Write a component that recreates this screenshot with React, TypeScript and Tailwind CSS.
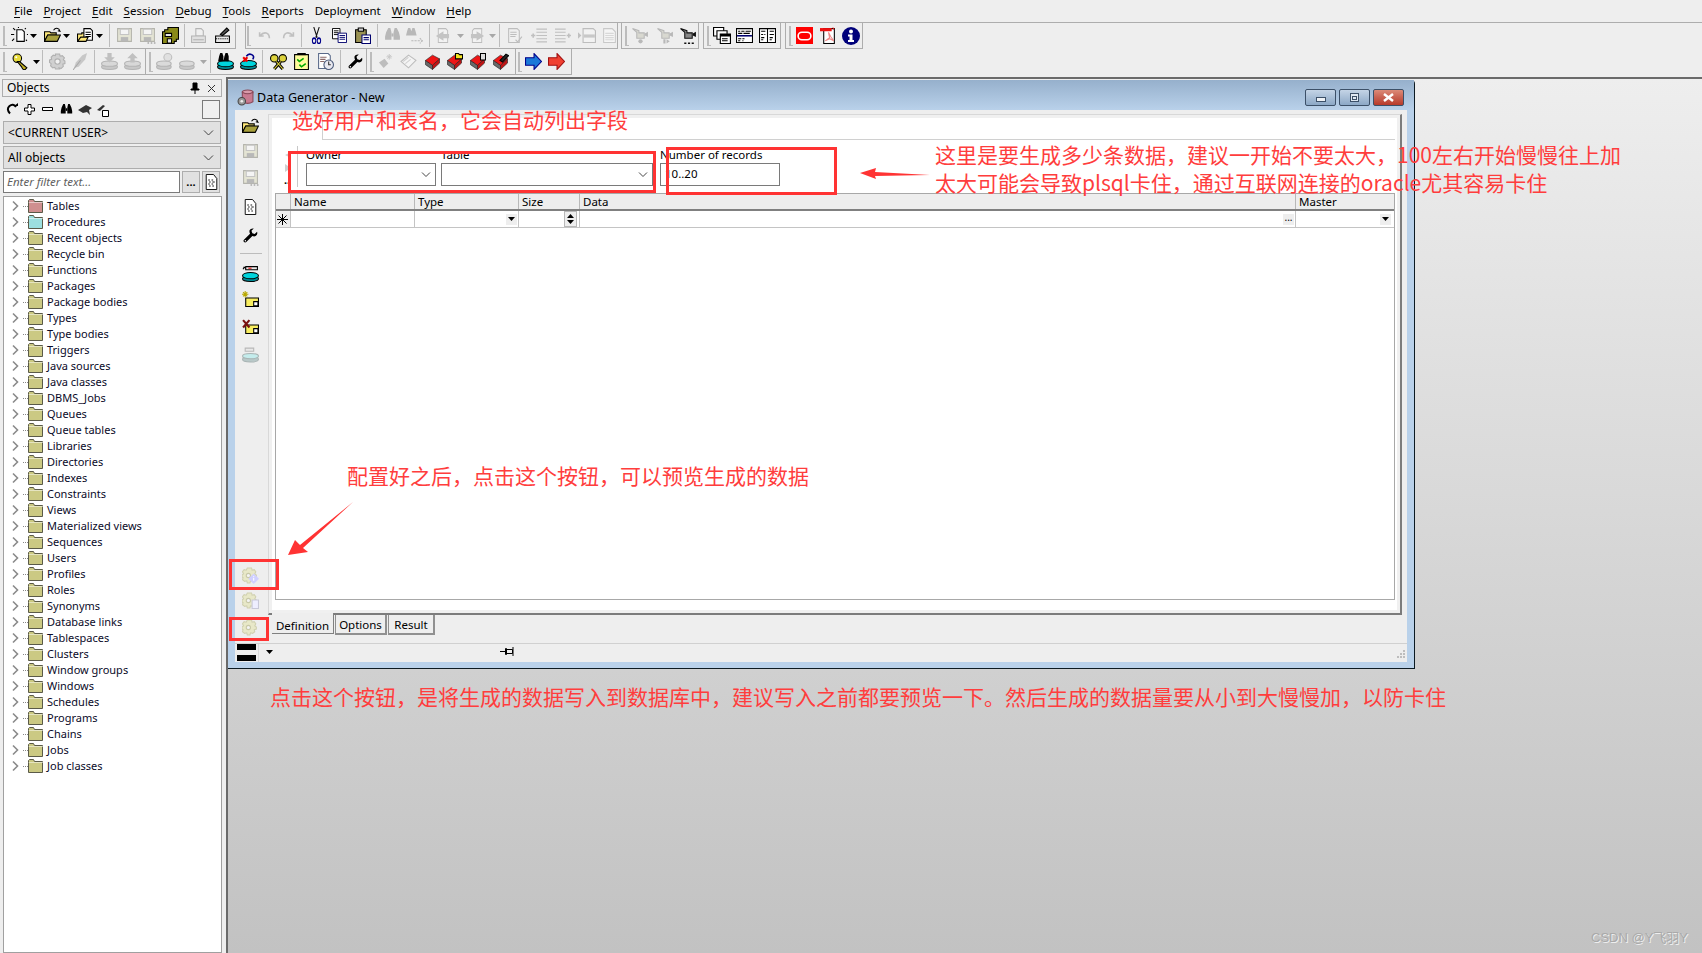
import type { ReactNode } from "react";

const ui = "font-['Noto_Sans',sans-serif]";

function Svg({ w = 17, h = 17, className = "", children }: { w?: number; h?: number; className?: string; children: ReactNode }) {
    return (
        <svg width={w} height={h} viewBox="0 0 16 16" preserveAspectRatio="none" className={`shrink-0 ${className}`}>
            {children}
        </svg>
    );
}

type P = { className?: string };

const Caret = ({ className = "", gray = false }: P & { gray?: boolean }) => (
    <svg width="7" height="4" viewBox="0 0 7 4" className={`shrink-0 ${className}`}>
        <path d="M0 0h7L3.5 4z" fill={gray ? "#a8a8a8" : "#000"} />
    </svg>
);
const Grip = ({ className = "" }: P) => <div className={`w-[4px] h-[20px] shrink-0 border-l-2 border-b border-[#bcbcbc] ${className}`} />;
const Sep = ({ className = "" }: P) => <div className={`w-px h-[23px] shrink-0 bg-[#bcbcbc] ${className}`} />;

const NewDoc = ({ className }: P) => (
    <Svg className={className}>
        <path d="M5.5 2.5h5l2 2v9h-7z" fill="#fff" stroke="#000" />
        <path d="M2 1l2 2M0 7h3M1 13l2-2M7 0v1M14 1l-1 1M15 7h1M15 13l-1-1" stroke="#000" />
    </Svg>
);
const OpenFolder = ({ className }: P) => (
    <Svg className={className}>
        <path d="M.5 4.5h5l1 1h5v2h-8l-3 6z" fill="#ffe97a" stroke="#000" />
        <path d="M3.5 7.5h12l-3 6H.5z" fill="#a8a03c" stroke="#000" />
        <path d="M9 3q2-3 5-1l1 2-2-.5" fill="none" stroke="#000" />
    </Svg>
);
const OpenDoc = ({ className }: P) => (
    <Svg className={className}>
        <path d="M.5 6.5h4v-1h3v8h-7z" fill="#ffe97a" stroke="#000" />
        <path d="M6.5 1.5h6l2 2v9h-8z" fill="#fff" stroke="#000" />
        <path d="M8 5h5M8 7h5M8 9h5" stroke="#000" />
        <path d="M3.5 9.5h7l-2 4h-8z" fill="#ffe97a" stroke="#000" />
    </Svg>
);
const SaveGray = ({ className, dots = false }: P & { dots?: boolean }) => (
    <Svg className={className}>
        <path d="M1.5 1.5h13v12h-13z" fill="#e4e4d4" stroke="#b4b4ac" />
        <path d="M4 2h8v5H4z" fill="#f4f4f4" stroke="#c4c4c4" />
        <path d="M4.5 9.5h7v4h-7z" fill="#b8b8b8" />
        {dots && <path d="M8 15h1.5M11 15h1.5M14 15h1.5" stroke="#a8a8a8" strokeWidth="1.5" />}
    </Svg>
);
const SaveAll = ({ className }: P) => (
    <Svg className={className}>
        <path d="M5.5.5h10v11h-2v2h-2v2h-11V4.500h2v-2h3z" fill="#8a8a18" stroke="#000" />
        <path d="M3 6h6v3H3zM5 11h4v4H5z" fill="#e8e8e8" stroke="#000" />
    </Svg>
);
const PrintGray = ({ className }: P) => (
    <Svg className={className}>
        <path d="M5.500 1.500h5l2 2v5h-7z" fill="#f0f0f0" stroke="#b4b4b4" />
        <path d="M1.500 8.500h13v6h-13z" fill="#e0e0e0" stroke="#b4b4b4" />
        <path d="M3 12h10" stroke="#b4b4b4" />
    </Svg>
);
const PrintSetup = ({ className }: P) => (
    <Svg className={className}>
        <path d="M1.500 8.500h13v6h-13z" fill="#e8e8e8" stroke="#000" />
        <path d="M2 11h12" stroke="#000" strokeDasharray="1 1" />
        <path d="M6 7l6-6 2 2-6 5z" fill="#555" stroke="#000" />
    </Svg>
);
const Undo = ({ className, flip = false }: P & { flip?: boolean }) => (
    <Svg w={13} h={12} className={`${flip ? "-scale-x-100" : ""} ${className}`}>
        <path d="M2 3v5h5M2.500 8Q6 3 10 4t4 7" fill="none" stroke="#c0c0c0" strokeWidth="2" />
    </Svg>
);
const Scissors = ({ className }: P) => (
    <Svg w={11} h={17} className={className}>
        <path d="M4 0l5 10M12 0L7 10" stroke="#111" strokeWidth="1.5" />
        <circle cx="4.500" cy="13" r="2.500" fill="none" stroke="#00008b" strokeWidth="1.500" />
        <circle cx="11.500" cy="13" r="2.500" fill="none" stroke="#00008b" strokeWidth="1.500" />
    </Svg>
);
const Copy = ({ className }: P) => (
    <Svg w={15} h={15} className={className}>
        <path d="M.5.5h8v11h-8z" fill="#fff" stroke="#000" />
        <path d="M2 3h5M2 5h5M2 7h5" stroke="#000" />
        <path d="M6.500 5.500h9v10h-9z" fill="#fff" stroke="#00006e" />
        <path d="M8 8h6M8 10h6M8 12h6" stroke="#00006e" />
    </Svg>
);
const Paste = ({ className }: P) => (
    <Svg className={className}>
        <path d="M1.500 2.500h10v12h-10z" fill="#9a9252" stroke="#000" />
        <path d="M4 1h5v3H4z" fill="#ccc" stroke="#000" />
        <path d="M7.500 7.500h8v8h-8z" fill="#fff" stroke="#00006e" />
        <path d="M9 10h5M9 12h5" stroke="#00006e" />
    </Svg>
);
const Binoc = ({ className, color = "#b8b8b8", w = 17, h = 17 }: P & { color?: string; w?: number; h?: number }) => (
    <Svg w={w} h={h} className={className}>
        <path d="M2 5l2-4h2l1 4v7H1v-3zM14 5l-2-4h-2L9 5v7h6V9z" fill={color} />
        <path d="M7 6h2v3H7z" fill={color} />
    </Svg>
);
const FindNext = ({ className }: P) => (
    <Svg className={className}>
        <path d="M1 4l1-3h2l1 3v4H0zM9 4L8 1H6L5 4v4h5z" fill="#b8b8b8" />
        <path d="M5 13h10M13 10.500l2.500 2.500-2.500 2.500" fill="none" stroke="#b8b8b8" strokeDasharray="2 1" />
    </Svg>
);
const DocArrow = ({ className, flip = false }: P & { flip?: boolean }) => (
    <Svg w={15} h={17} className={`${flip ? "-scale-x-100" : ""} ${className}`}>
        <path d="M3.500 1.500h8l2 2v11h-10z" fill="#f2f2f2" stroke="#bdbdbd" />
        <path d="M9 4L1 8.500 9 13v-2.500h6v-4H9z" fill="#c4c4c4" />
    </Svg>
);
const DocCheck = ({ className }: P) => (
    <Svg className={className}>
        <path d="M2.500 1.500h8l2 2v11h-10z" fill="#f0f0f0" stroke="#bdbdbd" />
        <path d="M4 5h6M4 7h6M4 9h5M9 12l2 2 4-5" fill="none" stroke="#bdbdbd" />
    </Svg>
);
const Indent = ({ className, flip = false }: P & { flip?: boolean }) => (
    <Svg className={`${flip ? "-scale-x-100" : ""} ${className}`}>
        <path d="M6 2h10M6 5h10M6 8h10M6 11h10M6 14h10" stroke="#c0c0c0" />
        <path d="M1 8h4M3 6v4" stroke="#c0c0c0" strokeWidth="1.500" />
    </Svg>
);
const DocSide = ({ className }: P) => (
    <Svg w={18} h={17} className={className}>
        <path d="M0 5l3 3-3 3z" fill="#c0c0c0" />
        <path d="M4.500 1.500h9l2 2v11h-11z" fill="#f2f2f2" stroke="#bdbdbd" />
        <path d="M5 7h10v3H5z" fill="#c8c8c8" />
    </Svg>
);
const DocPlain = ({ className }: P) => (
    <Svg className={className}>
        <path d="M2.500 1.500h8l3 3v10h-11z" fill="#f5f5f5" stroke="#c8c8c8" />
        <path d="M4 6h8M4 8h8M4 10h8M4 12h8" stroke="#d8d8d8" />
    </Svg>
);
const Cam = ({ className, gray = true, mark = "dot" }: P & { gray?: boolean; mark?: "dot" | "play" | "dots" }) => {
    const c = gray ? "#b8b8b8" : "#111";
    return (
        <Svg className={className}>
            <path d="M.5 1.500l6 2v2h5v5h-7V5z" fill={gray ? "#d8d8d0" : "#888"} stroke={c} />
            <path d="M12 6l3-1.500v5L12 8z" fill={c} />
            {mark === "dot" && <circle cx="8" cy="13.500" r="2" fill={c} />}
            {mark === "play" && <path d="M6 11.500h2v4H6zM9 11.500l3 2-3 2z" fill={c} />}
            {mark === "dots" && <path d="M4 14.500h2v1.500H4zM7.500 14.500h2v1.500h-2zM11 14.500h2v1.500h-2z" fill={c} />}
        </Svg>
    );
};
const Win1 = ({ className }: P) => (
    <Svg w={18} h={17} className={className}>
        <path d="M.5.5h9v8h-9z" fill="#fff" stroke="#000" />
        <path d="M3.500 3.500h9v8h-9z" fill="#fff" stroke="#000" />
        <path d="M6.500 6.500h9v9h-9z" fill="#fff" stroke="#000" />
        <path d="M7 7h8v1.500H7zM8 11h5M8 13h5" stroke="#000" />
    </Svg>
);
const Win2 = ({ className }: P) => (
    <Svg className={className}>
        <path d="M.5 1.500h15v13H.5z" fill="#fff" stroke="#000" />
        <path d="M1 7.500h14V9H1z" fill="#00006e" />
        <path d="M2 4h2M5 4h3M9 4h5M2 6h4M7 6h6M2 11h3M6 11h2M2 13h2M6 13h1" stroke="#000" />
    </Svg>
);
const Win3 = ({ className }: P) => (
    <Svg className={className}>
        <path d="M.5 1.500h15v13H.5zM8 2v12" fill="#fff" stroke="#000" />
        <path d="M2 4h4M2 7h2M5 7h1M2 10h3M2 12h2M10 4h4M10 7h4M10 10h3M10 12h2" stroke="#000" />
    </Svg>
);
const OracleIcon = ({ className }: P) => (
    <Svg className={className}>
        <path d="M0 0h16v16H0z" fill="#f00" />
        <rect x="2" y="5" width="12" height="7" rx="3.500" fill="none" stroke="#fff" strokeWidth="1.500" />
    </Svg>
);
const PdfIcon = ({ className }: P) => (
    <Svg className={className}>
        <path d="M3.500 1.500h10v14h-10z" fill="#fff" stroke="#000" />
        <path d="M0 1h11v3H0z" fill="#e11" />
        <path d="M12 0l2 2h-2z" fill="#e11" />
        <path d="M8 5l1 5-4 3 4-2 4 2-3-4z" fill="none" stroke="#e88" />
    </Svg>
);
const InfoIcon = ({ className }: P) => (
    <svg width="18" height="18" viewBox="0 0 18 18" className={`shrink-0 ${className}`}>
        <circle cx="9" cy="9" r="9" fill="#00007a" />
        <circle cx="9" cy="4.500" r="2" fill="#fff" />
        <path d="M6 7.500h4.500V13H12v2H6v-2h1.500V9.500H6z" fill="#fff" />
    </svg>
);
const Key = ({ className }: P) => (
    <Svg className={className}>
        <circle cx="5" cy="5" r="4" fill="#e8dc3c" stroke="#000" />
        <path d="M7 8l7 6-2 2-2-1-1-2-4-5z" fill="#c4b020" stroke="#000" />
        <circle cx="4" cy="4" r="1" fill="#fff" />
    </Svg>
);
const GearGray = ({ className, color = "#d0d0d0", line = "#b0b0b0" }: P & { color?: string; line?: string }) => (
    <Svg className={className}>
        <path d="M6 1h4l.5 2 2-.5 2 2-1 2 1.500 1v2.500l-2 .5.5 2-2 2-2-.500L10 15H6l-.5-1.500-2 .5-2-2 .5-2-1.500-1V6.500l2-.5-.5-2 2-2 2 .5z" fill={color} stroke={line} />
        <circle cx="8" cy="8" r="2.500" fill="#f0f0f0" stroke={line} />
    </Svg>
);
const Leaf = ({ className }: P) => (
    <Svg w={15} h={17} className={className}>
        <path d="M15 0L10 2 3 9l-2 5 5-1 7-7z" fill="#c8c8c8" />
        <path d="M0 16l8-9" stroke="#a8a8a8" />
    </Svg>
);
const DbArrow = ({ className, up = false }: P & { up?: boolean }) => (
    <Svg className={className}>
        <ellipse cx="8" cy="13" rx="7.500" ry="2.500" fill="#c8c8c8" stroke="#b4b4b4" />
        <ellipse cx="8" cy="10" rx="7.500" ry="2.500" fill="#d8d8d8" stroke="#b4b4b4" />
        <path d={up ? "M8 0l5 5h-3v4H6V5H3z" : "M6 0h4v4h3l-5 5-5-5h3z"} fill="#c0c0c0" />
    </Svg>
);
const DbGray = ({ className, bulb = false }: P & { bulb?: boolean }) => (
    <Svg w={18} h={17} className={className}>
        <ellipse cx="7" cy="13" rx="6.500" ry="2.500" fill="#c8c8c8" stroke="#b4b4b4" />
        <ellipse cx="7" cy="10" rx="6.500" ry="2.500" fill="#dadada" stroke="#b4b4b4" />
        {bulb && <circle cx="10.500" cy="4" r="3.500" fill="#e0e0e0" stroke="#c0c0c0" />}
    </Svg>
);
const CyanDb = ({ className, top }: P & { top: "binoc" | "x" | "chip" }) => (
    <Svg className={className}>
        <ellipse cx="8" cy="13" rx="7.500" ry="2.500" fill="#008b96" stroke="#000" />
        <ellipse cx="8" cy="10" rx="7.500" ry="3" fill="#00d4dc" stroke="#000" />
        {top === "binoc" && <path d="M2 3l1-3h2l1 3v5H1zM7 3L8 0h2l1 3v5H6z" fill="#000" />}
        {top === "x" && <path d="M3 4l4 4M7 4L3 8" stroke="#e00" strokeWidth="2" />}
        {top === "x" && <path d="M6 3q2-3 5-1.500t1 4.500" fill="none" stroke="#00008b" strokeWidth="1.500" />}
        {top === "chip" && <path d="M3.500 1.500h11v3h-11zM1 4l1-2 1 1" fill="#e8e8e8" stroke="#000" />}
        {top === "chip" && <path d="M6 3h3" stroke="#e00" />}
    </Svg>
);
const Keys = ({ className }: P) => (
    <Svg className={className}>
        <circle cx="4" cy="5" r="3.500" fill="#dcd23c" stroke="#000" />
        <circle cx="12" cy="5" r="3.500" fill="#dcd23c" stroke="#000" />
        <path d="M6 8l6 7M10 8l-6 7" stroke="#000" strokeWidth="3" />
        <path d="M6 8l6 7M10 8l-6 7" stroke="#dcd23c" />
    </Svg>
);
const Checklist = ({ className }: P) => (
    <Svg className={className}>
        <path d="M1.500 1.500h13v14h-13z" fill="#fffc9c" stroke="#000" />
        <path d="M4 0h8v2H4z" fill="#000" />
        <path d="M4 6l2 2 4-3M6 11l2 2 4-3" fill="none" stroke="#0a0" strokeWidth="1.500" />
    </Svg>
);
const DocClock = ({ className }: P) => (
    <Svg className={className}>
        <path d="M1.500 .5h9l2 2v12h-11z" fill="#fff" stroke="#5a6a8a" />
        <path d="M3 4h6M3 6h5M3 8h4" stroke="#8a6a6a" />
        <circle cx="11" cy="11" r="4.500" fill="#e8e8f0" stroke="#4a5a7a" />
        <path d="M11 8v3h2" fill="none" stroke="#333" />
    </Svg>
);
const Wrench = ({ className }: P) => (
    <Svg w={15} h={15} className={className}>
        <path d="M15 4l-2.500 2.500-2.500-1-1-2.500L11.500.5Q8 0 7 2.500 6.500 4.500 7.500 6L1 12.500q-1 1 0 2.500 1.500 1 2.500 0L10 8.500q2 1 3.500 0Q16 7 15 4z" fill="#000" />
        <circle cx="2.500" cy="13.500" r=".8" fill="#fff" />
    </Svg>
);
const GearStar = ({ className }: P) => (
    <Svg w={15} h={15} className={className}>
        <path d="M1 9l6-4 4 5-5 5z" fill="#bdbdbd" />
        <path d="M12 0v6M9 3h6M10 1l4 4M14 1l-4 4" stroke="#c8c8c8" />
    </Svg>
);
const BookGray = ({ className }: P) => (
    <Svg className={className}>
        <path d="M1 8l7-6 7 5-7 7z" fill="#f4f4f4" stroke="#bdbdbd" />
        <path d="M8 4l-5 4M10 6l-5 4" stroke="#d0d0d0" />
    </Svg>
);
const RedBook = ({ className, extra = "none" }: P & { extra?: "none" | "folder" | "doc" | "pencil" }) => (
    <Svg w={16} h={17} className={className}>
        <path d="M.5 7v4l7 4.500V11.500z" fill="#6a6a6a" stroke="#222" strokeWidth=".6" />
        <path d="M7.500 11.500v4l7-6v-4z" fill="#c01414" stroke="#222" strokeWidth=".6" />
        <path d="M.5 7l7-5 7 3.500-7 6z" fill="#ee1616" stroke="#222" strokeWidth=".6" />
        {extra === "folder" && <path d="M8.500 .5h3l1 1h3v4h-7z" fill="#f4e420" stroke="#000" />}
        {extra === "doc" && <path d="M10.500 .5h5v6h-5z" fill="#ddd" stroke="#000" />}
        {extra === "pencil" && <path d="M7 7l6-6 2.500 1.500-6 6z" fill="#222" stroke="#000" />}
    </Svg>
);
const ArrowRight = ({ className, fill, edge }: P & { fill: string; edge: string }) => (
    <Svg className={className}>
        <path d="M.5 4.500h8V.5L15.500 8l-7 7.500v-4h-8z" fill={fill} stroke={edge} />
    </Svg>
);
const FilledDoc = ({ className }: P) => (
    <Svg w={13} h={16} className={className}>
        <path d="M1.500 .5h9l4 4v11h-13z" fill="#fff" stroke="#000" />
        <path d="M4 6h2M8 6h2M5 8h2M9 8h3M4 10h2M8 10h2M5 12h2M9 12h2" stroke="#000" />
    </Svg>
);
const TreeFolder = ({ color }: { color: string }) => (
    <svg width="15" height="14" viewBox="0 0 15 14" className="shrink-0">
        <path d="M.5 3.500v-2l1-1h4l1 2h8v11H.5z" fill={color} stroke="#5a5a48" />
        <path d="M1 3.500h14" stroke="#fff" strokeOpacity=".5" />
    </svg>
);
const Chevron = ({ className = "" }: P) => (
    <svg width="12" height="12" viewBox="0 0 12 12" className={`shrink-0 ${className}`}>
        <path d="M3 1.500l4.500 4.500L3 10.500" fill="none" stroke="#8a8a8a" strokeWidth="1.600" />
    </svg>
);
const Gear = ({ variant }: { variant: "info" | "list" | "none" }) => (
    <Svg className="shrink-0">
        <path d="M5 1h4l.5 2 2-.5 1.500 2-1 2 1.500 1v2l-2 .5.5 2-2 1.500-2-.5-.5 2H5l-.5-2-2 .5-2-1.500.5-2L0 9.500v-2l1.500-1-1-2 1.500-2 2 .5z" fill="#e8e8c8" stroke="#d0d0b0" />
        <circle cx="6" cy="8" r="2" fill="#f4f4f4" stroke="#c8c8a8" />
        {variant === "info" && <path d="M11 6l5 5-5 5-5-5z" fill="#d0d0ff" />}
        {variant === "info" && <path d="M11 8.500v.6M11 10v3" stroke="#fff" />}
        {variant === "list" && <path d="M9.500 7.500h6v8h-6z" fill="#eef" stroke="#c8c8d8" />}
    </Svg>
);

const Group = ({ className = "", children }: { className?: string; children: ReactNode }) => (
    <div className={`h-[26px] shrink-0 flex items-center border-b border-r border-[#adadad] ${className}`}>{children}</div>
);

const menus = ["File", "Project", "Edit", "Session", "Debug", "Tools", "Reports", "Deployment", "Window", "Help"];

const tree = [
    "Tables", "Procedures", "Recent objects", "Recycle bin", "Functions", "Packages", "Package bodies", "Types", "Type bodies",
    "Triggers", "Java sources", "Java classes", "DBMS_Jobs", "Queues", "Queue tables", "Libraries", "Directories", "Indexes",
    "Constraints", "Views", "Materialized views", "Sequences", "Users", "Profiles", "Roles", "Synonyms", "Database links",
    "Tablespaces", "Clusters", "Window groups", "Windows", "Schedules", "Programs", "Chains", "Jobs", "Job classes",
];

function MenuBar() {
    return (
        <div className="h-[23px] shrink-0 flex items-center pl-[14px] gap-[11px] border-b border-[#adadad] text-[11.5px] text-black">
            {menus.map((m) => (
                <span key={m}>
                    {m === "Deployment" ? m[0] : <span className="underline underline-offset-2">{m[0]}</span>}
                    {m.slice(1)}
                </span>
            ))}
        </div>
    );
}

function Toolbars() {
    return (
        <div className="shrink-0">
            <div className="flex">
                <Group className="w-[236px] pl-[3px]">
                    <Grip />
                    <NewDoc className="ml-[4px]" />
                    <Caret className="ml-[2px]" />
                    <OpenFolder className="ml-[7px]" />
                    <Caret className="ml-[2px]" />
                    <OpenDoc className="ml-[7px]" />
                    <Caret className="ml-[2px]" />
                    <Sep className="ml-[6px]" />
                    <SaveGray className="ml-[6px]" />
                    <SaveGray dots className="ml-[6px]" />
                    <SaveAll className="ml-[6px]" />
                    <Sep className="ml-[5px]" />
                    <PrintGray className="ml-[5px]" />
                    <PrintSetup className="ml-[7px]" />
                </Group>
                <Group className="ml-[9px] w-[373px] border-l pl-[1px]">
                    <Grip />
                    <Undo className="ml-[7px]" />
                    <Undo flip className="ml-[11px]" />
                    <Sep className="ml-[6px]" />
                    <Scissors className="ml-[9px]" />
                    <Copy className="ml-[10px]" />
                    <Paste className="ml-[7px]" />
                    <Sep className="ml-[6px]" />
                    <Binoc className="ml-[6px]" />
                    <FindNext className="ml-[5px]" />
                    <Sep className="ml-[6px]" />
                    <DocArrow className="ml-[5px]" />
                    <Caret gray className="ml-[7px]" />
                    <DocArrow flip className="ml-[6px]" />
                    <Caret gray className="ml-[4px]" />
                    <Sep className="ml-[3px]" />
                    <DocCheck className="ml-[6px]" />
                    <Indent className="ml-[7px]" />
                    <Indent flip className="ml-[8px]" />
                    <DocSide className="ml-[6px]" />
                    <DocPlain className="ml-[5px]" />
                </Group>
                <Group className="ml-[3px] w-[78px] border-l pl-[3px]">
                    <Grip />
                    <Cam className="ml-[3px]" />
                    <Cam mark="play" className="ml-[8px]" />
                    <Cam gray={false} mark="dots" className="ml-[6px]" />
                </Group>
                <Group className="ml-[4px] w-[78px] border-l pl-[3px]">
                    <Grip />
                    <Win1 className="ml-[2px]" />
                    <Win2 className="ml-[5px]" />
                    <Win3 className="ml-[6px]" />
                </Group>
                <Group className="ml-[4px] w-[78px] border-l pl-[3px]">
                    <Grip />
                    <OracleIcon className="ml-[3px]" />
                    <PdfIcon className="ml-[7px]" />
                    <InfoIcon className="ml-[5px]" />
                </Group>
            </div>
            <div className="flex">
                <Group className="w-[146px] pl-[3px]">
                    <Grip />
                    <Key className="ml-[5px]" />
                    <Caret className="ml-[4px]" />
                    <Sep className="ml-[2px]" />
                    <GearGray className="ml-[6px]" />
                    <Leaf className="ml-[7px]" />
                    <Sep className="ml-[6px]" />
                    <DbArrow className="ml-[6px]" />
                    <DbArrow up className="ml-[6px]" />
                </Group>
                <Group className="w-[221px] pl-[3px]">
                    <Grip />
                    <DbGray bulb className="ml-[3px]" />
                    <DbGray className="ml-[5px]" />
                    <Caret gray className="ml-[3px]" />
                    <Sep className="ml-[3px]" />
                    <CyanDb top="binoc" className="ml-[6px]" />
                    <CyanDb top="x" className="ml-[6px]" />
                    <Sep className="ml-[5px]" />
                    <Keys className="ml-[7px]" />
                    <Checklist className="ml-[6px]" />
                    <DocClock className="ml-[7px]" />
                    <Sep className="ml-[6px]" />
                    <Wrench className="ml-[7px]" />
                </Group>
                <Group className="w-[149px] pl-[3px]">
                    <Grip />
                    <GearStar className="ml-[4px]" />
                    <BookGray className="ml-[7px]" />
                    <RedBook className="ml-[8px]" />
                    <RedBook extra="folder" className="ml-[6px]" />
                    <RedBook extra="doc" className="ml-[7px]" />
                    <RedBook extra="pencil" className="ml-[7px]" />
                </Group>
                <Group className="w-[56px] pl-[2px]">
                    <Grip />
                    <ArrowRight fill="#1a78d8" edge="#00008b" className="ml-[3px]" />
                    <ArrowRight fill="#f04030" edge="#a01010" className="ml-[6px]" />
                </Group>
            </div>
        </div>
    );
}

function ObjectsPanel() {
    return (
        <div className="w-[226px] shrink-0 pt-[2px] pl-[2px] pr-[4px] flex flex-col text-[11px] text-black">
            <div className="h-[18px] flex items-center pl-[4px] pr-[5px] border border-[#adadad] text-[12px]">
                <span className="flex-1">Objects</span>
                <svg width="10" height="12" viewBox="0 0 10 12" className="mr-[7px]">
                    <path d="M3 1h4v6h2v1H1V7h2zM5 8v4" fill="#000" stroke="#000" />
                </svg>
                <svg width="9" height="9" viewBox="0 0 9 9">
                    <path d="M1 1l7 7M8 1L1 8" stroke="#333" />
                </svg>
            </div>
            <div className="h-[25px] flex items-center pl-[4px]">
                <svg width="12" height="13" viewBox="0 0 12 13">
                    <path d="M10 4Q7 0 3.500 3T4 10.500" fill="none" stroke="#000" strokeWidth="2" />
                    <path d="M8 3h4V0z" fill="#000" />
                </svg>
                <svg width="11" height="11" viewBox="0 0 11 11" className="ml-[6px]">
                    <path d="M4 .5h3V4h3.500v3H7v3.500H4V7H.5V4H4z" fill="#fff" stroke="#000" />
                </svg>
                <svg width="11" height="5" viewBox="0 0 11 5" className="ml-[7px]">
                    <path d="M.5.5h10v3H.5z" fill="#fff" stroke="#000" />
                </svg>
                <Binoc color="#000" w={13} h={14} className="ml-[7px]" />
                <svg width="14" height="14" viewBox="0 0 14 14" className="ml-[5px]">
                    <path d="M0 7l8-5 6 3-3 2 1 5-3-3-4 1z" fill="#333" />
                </svg>
                <svg width="14" height="14" viewBox="0 0 14 14" className="ml-[4px]">
                    <path d="M1 7l6-5 2 1-5 5z" fill="#333" />
                    <path d="M6.500 7.500h6v6h-6z" fill="#fff" stroke="#000" />
                </svg>
                <div className="ml-auto mr-[2px] w-[18px] h-[19px] border border-[#7a7a7a] bg-[#f0f0f0]" />
            </div>
            <div className="mx-[1px] h-[23px] mt-[-1px] flex items-center pl-[4px] pr-[6px] border border-[#adadad] bg-[#e1e1e1] text-[12px]">
                <span className="flex-1">&lt;CURRENT USER&gt;</span>
                <svg width="11" height="6" viewBox="0 0 11 6"><path d="M1 .5l4.500 4.500L10 .5" fill="none" stroke="#444" /></svg>
            </div>
            <div className="mx-[1px] h-[23px] mt-[2px] flex items-center pl-[4px] pr-[6px] border border-[#adadad] bg-[#e1e1e1] text-[12px]">
                <span className="flex-1">All objects</span>
                <svg width="11" height="6" viewBox="0 0 11 6"><path d="M1 .5l4.500 4.500L10 .5" fill="none" stroke="#444" /></svg>
            </div>
            <div className="mx-[1px] mt-[2px] h-[22px] flex">
                <div className="w-[177px] border border-[#7a7a7a] bg-white pl-[3px] italic text-[#5f5f5f] leading-[19px] text-[11.5px]">Enter filter text...</div>
                <div className="ml-[2px] w-[18px] border border-[#adadad] bg-[#e1e1e1] text-center leading-[20px] font-bold">...</div>
                <div className="ml-[2px] w-[18px] border border-[#adadad] bg-[#e1e1e1] flex items-center justify-center">
                    <FilledDoc />
                </div>
            </div>
            <div className="mt-[3px] ml-[1px] flex-1 border border-[#a0a0a0] bg-white pt-px overflow-hidden">
                {tree.map((name, i) => (
                    <div key={name} className="h-4 flex items-center">
                        <Chevron className="ml-[6px]" />
                        <span className="w-[5px] ml-[1px] border-t border-dotted border-[#888]" />
                        <TreeFolder color={i === 0 ? "#cf8f8f" : i === 1 ? "#9cdfdf" : "#cbc983"} />
                        <span className="ml-[4px] whitespace-nowrap text-[#0a0a28]">{name}</span>
                    </div>
                ))}
            </div>
        </div>
    );
}

function WinButton({ kind }: { kind: "min" | "max" | "close" }) {
    const bg = kind === "close" ? "bg-linear-to-b from-[#dc8a78] via-[#c86050] to-[#b83a2a]" : "bg-linear-to-b from-[#c4d4e6] via-[#a8bed6] to-[#8ca8c6]";
    return (
        <div className={`w-[31px] h-[17px] rounded-[2px] border border-[#3c5068] flex items-center justify-center ${bg}`}>
            {kind === "min" && <div className="w-[10px] h-[5px] mt-[3px] border border-[#3c5068] bg-[#eef2f6]" />}
            {kind === "max" && <div className="w-[9px] h-[9px] border border-[#3c5068] bg-[#dfe8f2] flex items-center justify-center"><div className="w-[5px] h-[4px] border border-[#3c5068]" /></div>}
            {kind === "close" && (
                <svg width="11" height="9" viewBox="0 0 11 9">
                    <path d="M1 1l9 7M10 1L1 8" stroke="#fff" strokeWidth="2.500" />
                </svg>
            )}
        </div>
    );
}

function DataGenerator() {
    const labelCell = "h-full flex items-center pl-[3px] border-r border-[#b8b8b8]";
    const rowCell = "h-full flex items-center justify-end pr-[1px] border-r border-[#c4c4c4]";
    return (
        <div className="w-[1187px] h-[589px] mt-px flex flex-col border-r border-b border-[#0c1a22] rounded-tr-[4px] bg-[#b9d1ea]">
            <div className="h-[30px] shrink-0 flex items-center pl-[9px] pr-[10px] pt-[5px] bg-linear-to-b from-[#96b0cc] to-[#b9d1ea]">
                <svg width="17" height="17" viewBox="0 0 16 16" className="shrink-0">
                    <ellipse cx="10" cy="3" rx="5" ry="2" fill="#d89aaa" stroke="#8a4a5a" />
                    <path d="M5 3v9q5 3 10 0V3q-5 3-10 0z" fill="#c87a90" stroke="#8a4a5a" />
                    <circle cx="4.500" cy="11.500" r="3.500" fill="#999" stroke="#444" />
                    <circle cx="4.500" cy="11.500" r="1.200" fill="#eee" />
                </svg>
                <span className="ml-[3px] mt-px text-[12.5px] text-black flex-1">Data Generator - New</span>
                <div className="flex gap-[3px]">
                    <WinButton kind="min" />
                    <WinButton kind="max" />
                    <WinButton kind="close" />
                </div>
            </div>
            <div className="mx-[7px] h-[552px] shrink-0 flex flex-col bg-[#eeeeee]">
                <div className="flex h-[533px] shrink-0">
                    <div className="w-[33px] shrink-0 flex flex-col items-center pt-[8px] pr-[2px]">
                        <OpenFolder />
                        <SaveGray className="mt-[8px]" />
                        <SaveGray dots className="mt-[9px]" />
                        <FilledDoc className="mt-[13px]" />
                        <Wrench className="mt-[13px]" />
                        <div className="w-[22px] h-px bg-[#bcbcbc] mt-[10px]" />
                        <CyanDb top="chip" className="mt-[11px]" />
                        <Svg className="mt-[9px]">
                            <path d="M3.500 6.500h12v8h-12z" fill="#f8ee60" stroke="#000" />
                            <path d="M3 0v6M0 3h6M1 1l4 4M5 1L1 5" stroke="#b8a800" />
                            <path d="M11 10h4v4h-4z" fill="#fff" stroke="#000" />
                        </Svg>
                        <Svg className="mt-[10px]">
                            <path d="M3.500 6.500h12v8h-12z" fill="#f8ee60" stroke="#000" />
                            <path d="M1 2l6 7M7 2L1 9" stroke="#7a1010" strokeWidth="2" />
                            <path d="M11 10h4v4h-4z" fill="#fff" stroke="#000" />
                        </Svg>
                        <Svg className="mt-[11px]">
                            <ellipse cx="8" cy="12.500" rx="7.500" ry="2.500" fill="#b8c8c8" stroke="#a8b4b4" />
                            <ellipse cx="8" cy="9.500" rx="7.500" ry="2.500" fill="#c4ecec" stroke="#a8b4b4" />
                            <path d="M3 2h8v3H3z" fill="#e8e8e8" stroke="#b8b8b8" />
                        </Svg>
                        <div className="mt-auto flex flex-col items-center pb-[7px]">
                            <Gear variant="info" />
                            <div className="h-[8px]" />
                            <Gear variant="list" />
                            <div className="h-[10px]" />
                            <Gear variant="none" />
                        </div>
                    </div>
                    <div className="flex-1 flex flex-col min-w-0">
                        <div className="mt-[4px] w-[1134px] h-[501px] flex flex-col border-t border-l border-[#d8d8d8] border-r-2 border-b-2 border-r-[#7c7c7c] border-b-[#7c7c7c] p-[3px] bg-[#f0f0f0]">
                            <div className="flex-1 flex flex-col bg-white min-h-0">
                                <div className="h-[22px] shrink-0 pl-[50px] pr-[2px]">
                                    <div className="h-full border-l border-b border-[#d0d0d0]" />
                                </div>
                                <div className="h-[53px] shrink-0 flex text-[11.5px] text-black">
                                    <div className="w-[26px] shrink-0 border-r border-[#c8c8c8] my-[6px] relative pl-[12px]">
                                        <svg width="6" height="6" viewBox="0 0 6 6" className="mt-[6px] ml-[1px]">
                                            <path d="M6 0v6L0 3z" fill="#d0d0d0" />
                                        </svg>
                                        <svg width="6" height="8" viewBox="0 0 6 8" className="mt-[6px] ml-[1px]">
                                            <path d="M0 0v8l6-4z" fill="#d0d0d0" />
                                        </svg>
                                        <div className="mt-[3px] text-[11px] font-bold leading-[10px]">..</div>
                                    </div>
                                    <div className="ml-[8px] w-[130px] shrink-0 pt-[6px]">
                                        <div className="h-[17px] leading-[17px]">Owner</div>
                                        <div className="h-[23px] border border-[#7a7a7a] flex items-center justify-end pr-[4px]">
                                            <svg width="10" height="6" viewBox="0 0 10 6"><path d="M1 .5l4 4 4-4" fill="none" stroke="#444" /></svg>
                                        </div>
                                    </div>
                                    <div className="ml-[5px] w-[212px] shrink-0 pt-[6px]">
                                        <div className="h-[17px] leading-[17px]">Table</div>
                                        <div className="h-[23px] border border-[#7a7a7a] flex items-center justify-end pr-[4px]">
                                            <svg width="10" height="6" viewBox="0 0 10 6"><path d="M1 .5l4 4 4-4" fill="none" stroke="#444" /></svg>
                                        </div>
                                    </div>
                                    <div className="ml-[7px] w-[120px] shrink-0 pt-[6px]">
                                        <div className="h-[17px] leading-[17px] whitespace-nowrap">Number of records</div>
                                        <div className="h-[23px] border border-[#7a7a7a] pl-[4px] leading-[20px]">10..20</div>
                                    </div>
                                </div>
                                <div className="w-[1120px] h-[407px] ml-[3px] shrink-0 border border-[#a8a8a8] flex flex-col text-[11.5px] text-black">
                                    <div className="h-[17px] shrink-0 flex bg-[#eeeeee] border-b-2 border-[#808080]">
                                        <div className={`${labelCell} w-[15px]`} />
                                        <div className={`${labelCell} w-[124px]`}>Name</div>
                                        <div className={`${labelCell} w-[104px]`}>Type</div>
                                        <div className={`${labelCell} w-[61px]`}>Size</div>
                                        <div className={`${labelCell} w-[716px]`}>Data</div>
                                        <div className="h-full flex items-center pl-[3px] w-[96px]">Master</div>
                                    </div>
                                    <div className="h-[17px] shrink-0 flex border-b border-[#c4c4c4]">
                                        <div className={`${rowCell} w-[15px] bg-[#eeeeee]`}>
                                            <svg width="11" height="11" viewBox="0 0 11 11" className="mr-[1px]">
                                                <path d="M5.500 0v11M0 5.500h11M1.500 1.500l8 8M9.500 1.500l-8 8" stroke="#000" />
                                            </svg>
                                        </div>
                                        <div className={`${rowCell} w-[124px]`} />
                                        <div className={`${rowCell} w-[104px]`}>
                                            <div className="w-[11px] h-[11px] bg-[#eeeeee] flex items-center justify-center"><Caret /></div>
                                        </div>
                                        <div className={`${rowCell} w-[61px]`}>
                                            <div className="w-[13px] h-full flex flex-col border border-[#b8b8b8] bg-[#eeeeee] items-center justify-evenly mr-[1px]">
                                                <Caret className="rotate-180" />
                                                <Caret />
                                            </div>
                                        </div>
                                        <div className={`${rowCell} w-[716px]`}>
                                            <div className="w-[11px] h-[11px] bg-[#eeeeee] text-[10px] leading-[6px] text-center">...</div>
                                        </div>
                                        <div className="h-full flex items-center justify-end pr-[1px] w-[96px]">
                                            <div className="w-[11px] h-[11px] bg-[#eeeeee] flex items-center justify-center"><Caret /></div>
                                        </div>
                                    </div>
                                </div>
                            </div>
                        </div>
                        <div className="flex h-[21px] items-start pl-[4px] text-[11.5px] text-black">
                            <div className="w-[62px] h-[21px] bg-[#eeeeee] mt-[-2px] border-r border-b border-[#808080] text-center leading-[26px]">Definition</div>
                            <div className="w-[52px] h-[20px] ml-px border border-t-0 border-r-2 border-b-2 border-[#909090] text-center leading-[20px]">Options</div>
                            <div className="w-[47px] h-[20px] ml-[1px] border border-t-0 border-r-2 border-b-2 border-[#909090] text-center leading-[20px]">Result</div>
                        </div>
                    </div>
                </div>
                <div className="h-[19px] shrink-0 flex items-center border-t border-[#d0d0d0] pl-[2px] pr-[2px]">
                    <div className="w-[19px] h-[17px] flex flex-col justify-between mt-[-1px]">
                        <div className="h-[6px] bg-black" />
                        <div className="h-[6px] bg-black" />
                    </div>
                    <div className="w-px h-full bg-[#d8d8d8] ml-[2px]" />
                    <Caret className="ml-[7px] mt-[-2px]" />
                    <svg width="14" height="9" viewBox="0 0 14 9" className="ml-[227px] mt-[-3px]">
                        <path d="M0 4.500h5M5.500 1.500h1v6h-1zM6.500 2.500h6v4h-6zM13 0v9" fill="#eee" stroke="#000" />
                    </svg>
                    <svg width="9" height="9" viewBox="0 0 9 9" className="ml-auto">
                        <path d="M7 1h2v2H7zM4 4h2v2H4zM7 4h2v2H7zM1 7h2v2H1zM4 7h2v2H4zM7 7h2v2H7z" fill="#bdbdbd" />
                    </svg>
                </div>
            </div>
        </div>
    );
}

function Annotations() {
    const note = "absolute whitespace-nowrap text-[21px] leading-none text-[#ff3d3d] font-['Noto_Sans_CJK_SC','Noto_Sans',sans-serif]";
    const box = "absolute border-[3px] border-[#ff3333]";
    return (
        <>
            <div className={`${box} left-[288px] top-[151px] w-[368px] h-[42px]`} />
            <div className={`${box} left-[666px] top-[147px] w-[171px] h-[48px]`} />
            <div className={`${box} left-[229px] top-[559px] w-[50px] h-[31px]`} />
            <div className={`${box} left-[229px] top-[617px] w-[40px] h-[24px]`} />
            <div className={`${note} left-[292px] top-[109px]`}>选好用户和表名，它会自动列出字段</div>
            <div className={`${note} left-[935px] top-[144px]`}>这里是要生成多少条数据，建议一开始不要太大，100左右开始慢慢往上加</div>
            <div className={`${note} left-[935px] top-[172px]`}>太大可能会导致plsql卡住，通过互联网连接的oracle尤其容易卡住</div>
            <div className={`${note} left-[347px] top-[465px]`}>配置好之后，点击这个按钮，可以预览生成的数据</div>
            <div className={`${note} left-[270px] top-[686px]`}>点击这个按钮，是将生成的数据写入到数据库中，建议写入之前都要预览一下。然后生成的数据量要从小到大慢慢加，以防卡住</div>
            <svg width="72" height="14" viewBox="0 0 72 14" className="absolute left-[859px] top-[166px]">
                <path d="M1 7l16-5-1 4 55 3-55 1 1 3z" fill="#ff3333" />
            </svg>
            <svg width="68" height="56" viewBox="0 0 68 56" className="absolute left-[286px] top-[501px]">
                <path d="M2 54l7-15 5 5L67 1 17 47l5 4z" fill="#ff3333" />
            </svg>
            <div className="absolute left-[1591px] top-[928px] text-[13px] text-[#a9a9a9] [text-shadow:1px_1px_0_#eeeeee] font-['Liberation_Sans','Noto_Sans_CJK_SC',sans-serif]">
                CSDN @Y飞羽Y
            </div>
        </>
    );
}

export default function App() {
    return (
        <div className={`relative w-[1702px] h-[953px] overflow-hidden flex flex-col bg-[#eeeeee] ${ui}`}>
            <MenuBar />
            <Toolbars />
            <div className="h-[2px] shrink-0" />
            <div className="flex-1 flex min-h-0">
                <ObjectsPanel />
                <div className="flex-1 border-t-2 border-l-2 border-[#6a6a6a] bg-linear-to-b from-[#eeeeee] to-[#c2c2c2]">
                    <DataGenerator />
                </div>
            </div>
            <Annotations />
        </div>
    );
}
